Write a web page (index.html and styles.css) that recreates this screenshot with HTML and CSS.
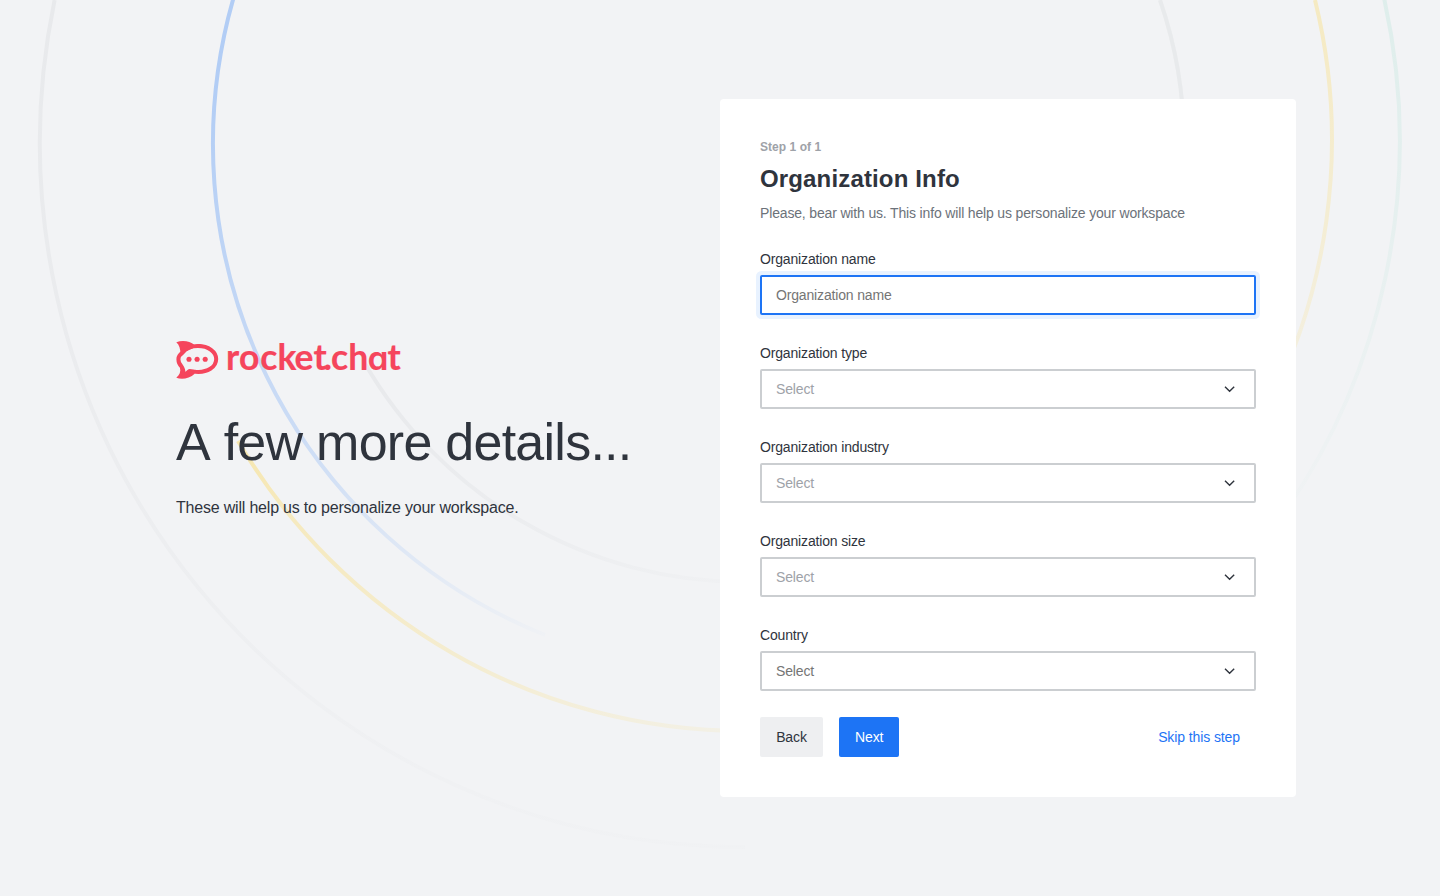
FILE: index.html
```html
<!DOCTYPE html>
<html lang="en">
<head>
<meta charset="utf-8">
<title>Organization Info</title>
<link rel="stylesheet" href="styles.css">
</head>
<body>
<svg class="rings" viewBox="0 0 1440 896" fill="none" stroke-width="4" aria-hidden="true">
  <defs>
    <linearGradient id="outer" gradientUnits="userSpaceOnUse" x1="0" y1="0" x2="0" y2="880"><stop stop-color="#9ea2a8" stop-opacity=".12"/><stop offset=".4" stop-color="#9ea2a8" stop-opacity=".09"/><stop offset="1" stop-color="#9ea2a8" stop-opacity=".01"/></linearGradient>
    <linearGradient id="blue" gradientUnits="userSpaceOnUse" x1="213" y1="80" x2="455" y2="690"><stop stop-color="#1d74f5" stop-opacity=".3"/><stop offset=".55" stop-color="#1d74f5" stop-opacity=".18"/><stop offset="1" stop-color="#1d74f5" stop-opacity="0"/></linearGradient>
    <linearGradient id="yellow" gradientUnits="userSpaceOnUse" x1="240" y1="440" x2="745" y2="732"><stop stop-color="#ffd031" stop-opacity=".36"/><stop offset=".12" stop-color="#ffd031" stop-opacity=".28"/><stop offset="1" stop-color="#ffd031" stop-opacity=".07"/></linearGradient>
    <linearGradient id="amber" gradientUnits="userSpaceOnUse" x1="0" y1="0" x2="0" y2="480"><stop stop-color="#ffd031" stop-opacity=".26"/><stop offset="1" stop-color="#ffd031" stop-opacity=".06"/></linearGradient>
    <linearGradient id="green" gradientUnits="userSpaceOnUse" x1="0" y1="0" x2="0" y2="560"><stop stop-color="#2dbf95" stop-opacity=".1"/><stop offset="1" stop-color="#2dbf95" stop-opacity="0"/></linearGradient>
    <linearGradient id="inner" gradientUnits="userSpaceOnUse" x1="365" y1="362" x2="744" y2="600"><stop stop-color="#9ea2a8" stop-opacity=".12"/><stop offset="1" stop-color="#9ea2a8" stop-opacity=".02"/></linearGradient>
  </defs>
  <path d="M54.600 0A704 704 0 0 0 745 847" stroke="url(#outer)"/>
  <path d="M233.500 -2A529 529 0 0 0 545 635" stroke="url(#blue)"/>
  <path d="M238 441A588 588 0 0 0 744 731" stroke="url(#yellow)"/>
  <path d="M1315 0A588.500 588.500 0 0 1 1255 431" stroke="url(#amber)"/>
  <path d="M1384 -2A657 657 0 0 1 1270 533" stroke="url(#green)"/>
  <path d="M364 362A439.500 439.500 0 0 0 744 582" stroke="url(#inner)"/>
  <path d="M1160 0A439.500 439.500 0 0 1 1184 143" stroke="#9ea2a8" stroke-opacity=".11"/>
</svg>
<main class="page">
  <section class="intro">
    <svg class="logo" viewBox="0 0 226 40" role="img" aria-label="rocket.chat">
      <path class="mark-fill" d="M0.300 2.200C6.500 0 14 1 18.500 5C20 4.500 23 4 26 4L15 9L4.500 13.500C4.300 9 3.500 5 0.300 2.200ZM0.300 37.700C3.600 35 5 31.500 4 28L8 28C9 31 8.500 33.500 6.500 35.500C9 35 11.500 33 13.500 30.600L19 33.500C13 39 5.500 40 0.300 37.700Z"/>
      <path class="mark" d="M6.500 12.700C10 8.300 15.500 6 22 6C32.500 6 40.200 11.700 40.200 19C40.200 27 31.500 32.900 19.500 31.800C17 31.500 15.500 31 13.500 31C11.800 32.700 9.500 34.500 7 35.500C7.800 32 7.500 29 5.500 26.500C3.500 24.500 2.400 21.800 2.400 19.200C2.400 16.500 4 14.300 6.500 12.700Z"/>
      <g class="mark-fill"><circle cx="13" cy="19.300" r="2.550"/><circle cx="21.100" cy="19.300" r="2.550"/><circle cx="29.200" cy="19.300" r="2.550"/></g>
      <text class="wordmark" y="30" x="50 63 84.300 101.500 118.500 137.500 147.500 155 172.300 191.700 211.500">rocket.ch<tspan class="round-a">a</tspan>t</text>
    </svg>
    <h1 class="headline">A few more details...</h1>
    <p class="subtitle">These will help us to personalize your workspace.</p>
  </section>
  <form class="card">
    <p class="step">Step 1 of 1</p>
    <h2 class="title">Organization Info</h2>
    <p class="description">Please, bear with us. This info will help us personalize your workspace</p>
    <div class="fields">
      <div class="field"><span class="label">Organization name</span><div class="control control-focused"><span class="placeholder">Organization name</span></div></div>
      <div class="field"><span class="label">Organization type</span><div class="control"><span class="muted">Select</span><svg class="chevron" viewBox="0 0 20 20"><path d="M5 7.700L9.600 12.200L14.200 7.700"/></svg></div></div>
      <div class="field"><span class="label">Organization industry</span><div class="control"><span class="muted">Select</span><svg class="chevron" viewBox="0 0 20 20"><path d="M5 7.700L9.600 12.200L14.200 7.700"/></svg></div></div>
      <div class="field"><span class="label">Organization size</span><div class="control"><span class="muted">Select</span><svg class="chevron" viewBox="0 0 20 20"><path d="M5 7.700L9.600 12.200L14.200 7.700"/></svg></div></div>
      <div class="field"><span class="label">Country</span><div class="control"><span class="placeholder">Select</span><svg class="chevron" viewBox="0 0 20 20"><path d="M5 7.700L9.600 12.200L14.200 7.700"/></svg></div></div>
    </div>
    <div class="actions">
      <button class="button back" type="button">Back</button>
      <button class="button next" type="button">Next</button>
      <button class="button skip" type="button">Skip this step</button>
    </div>
  </form>
</main>
</body>
</html>
```
FILE: styles.css
```css
* { box-sizing: border-box; }
body {
  margin: 0;
  background: #f2f3f5;
  color: #2f343d;
  font-family: "Liberation Sans", Arial, sans-serif;
  font-size: 14px;
  line-height: 20px;
  letter-spacing: -0.16px;
}
h1, h2, p { margin: 0; }
.rings { position: absolute; top: 0; left: 0; width: 1440px; height: 896px; z-index: -1; }
.page {
  display: flex;
  align-items: center;
  height: 896px;
  padding: 0 144px 0 176px;
}
.intro { width: 544px; padding-bottom: 36px; }
.logo { display: block; width: 226px; height: 40px; overflow: visible; }
.mark { fill: none; stroke: #f5455c; stroke-width: 4; stroke-linejoin: round; }
.mark-fill, .wordmark { fill: #f5455c; }
.wordmark { font-family: Lato, sans-serif; font-size: 35.500px; font-weight: 700; letter-spacing: 0; stroke: #f5455c; stroke-width: 0.2; }
.round-a { font-family: Inter, sans-serif; font-size: 33px; font-weight: 600; font-feature-settings: "cv11"; }
.headline { margin-top: 31px; font-size: 52px; line-height: 62px; font-weight: 400; letter-spacing: -0.74px; font-kerning: none; white-space: nowrap; }
.subtitle { margin-top: 23px; font-size: 16px; line-height: 24px; letter-spacing: -0.2px; }
.card {
  width: 576px;
  height: 698px;
  padding: 40px;
  border-radius: 4px;
  background: #fff;
}
.step { color: #9ea2a8; font-size: 12px; line-height: 16px; font-weight: 700; letter-spacing: 0.04px; }
.title { margin-top: 8px; font-size: 24px; line-height: 32px; font-weight: 700; letter-spacing: 0.15px; }
.description { margin-top: 8px; color: #6c727a; }
.fields { display: flex; flex-direction: column; gap: 28px; margin-top: 26px; }
.field { display: flex; flex-direction: column; gap: 6px; }
.control {
  display: flex;
  align-items: center;
  justify-content: space-between;
  height: 40px;
  padding: 0 14px;
  border: 2px solid #cbced1;
  border-radius: 2px;
}
.control-focused { border-color: #1d74f5; box-shadow: 0 0 0 4px #e8f2ff; }
.placeholder { color: #757575; }
.muted { color: #9ea2a8; }
.chevron { width: 20px; height: 20px; fill: none; stroke: #2f343d; stroke-width: 1.4; }
.actions { display: flex; margin-top: 26px; gap: 16px; }
.button {
  height: 40px;
  padding: 0 16px;
  border: 0;
  border-radius: 2px;
  background: transparent;
  font: inherit;
  letter-spacing: -0.1px;
}
.back { width: 63px; background: #eeeff1; color: #2f343d; }
.next { width: 60px; background: #1d74f5; color: #fff; }
.skip { margin-left: auto; color: #1d74f5; }
```
